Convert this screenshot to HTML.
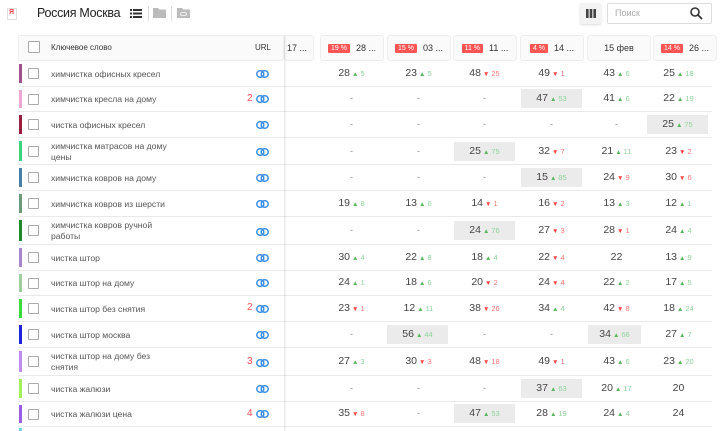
<!DOCTYPE html>
<html><head><meta charset="utf-8">
<style>
*{box-sizing:border-box;margin:0;padding:0}
body{width:720px;height:431px;overflow:hidden;background:#fff;font-family:"Liberation Sans","DejaVu Sans",sans-serif;color:#444;position:relative}
.a{position:absolute}
.hdr{position:absolute;top:35px;height:26px;border:1px solid #eee;border-radius:3px;background:#fafafa;font-size:9px;color:#333;display:flex;align-items:center;justify-content:center;gap:6px}
.bd{background:#f55;color:#fff;font-size:7px;padding:1px 3px;border-radius:1px}
.row{position:absolute;left:18px;width:694px;border-bottom:1px solid #e9e9e9}
.st{position:absolute;left:1px;top:3px;bottom:3px;width:3px}
.cb{position:absolute;left:10px;width:11px;height:11px;border:1px solid #aaa;border-radius:1px;background:#fff}
.kw{position:absolute;left:33px;font-size:8.6px;color:#555;line-height:11px;width:116px}
.n{position:absolute;left:229px;font-size:10px;color:#f55}
.lk{position:absolute;left:238px;width:13px;height:8px}
.c{position:absolute;width:61px;height:19px;text-align:center;font-size:10.5px;color:#444;line-height:19px;white-space:nowrap}
.g{background:#ebebeb}
.u{color:#5cb85c;font-size:6.5px;margin-left:2px}
.u em{font-style:normal;color:#8ed49b;font-size:7.5px;margin-left:2px}
.d{color:#f44;font-size:6.5px;margin-left:2px}
.d em{font-style:normal;color:#f77;font-size:7.5px;margin-left:2px}
.m{color:#888;font-size:9px}
.shadow{position:absolute;left:284px;top:35px;width:3px;height:396px;background:linear-gradient(to right,rgba(0,0,0,.08),rgba(0,0,0,0))}
</style></head><body>

<div class="a" style="left:7px;top:8px;width:10px;height:12px;border:1px solid #ddd;background:#fff;border-radius:1px"></div>
<div class="a" style="left:9px;top:9px;font-size:7px;color:#e44;font-weight:bold">Я</div>
<div class="a" style="left:37px;top:6px;font-size:12.5px;letter-spacing:-0.3px;color:#222">Россия Москва</div>
<svg class="a" style="left:130px;top:9px" width="12" height="9"><g fill="#333"><rect x="0" y="0" width="2" height="2"/><rect x="3" y="0" width="9" height="2"/><rect x="0" y="3.5" width="2" height="2"/><rect x="3" y="3.5" width="9" height="2"/><rect x="0" y="7" width="2" height="2"/><rect x="3" y="7" width="9" height="2"/></g></svg>
<div class="a" style="left:148px;top:6px;width:1px;height:15px;background:#ddd"></div>
<svg class="a" style="left:153px;top:7px" width="13" height="11"><path d="M0 1h5l1.5 1.5H13V11H0z" fill="#bbb"/></svg>
<div class="a" style="left:171px;top:6px;width:1px;height:15px;background:#ddd"></div>
<svg class="a" style="left:177px;top:7px" width="13" height="11"><path d="M0 1h5l1.5 1.5H13V11H0z" fill="#bbb"/><rect x="3.5" y="5.5" width="6" height="3" rx="1.5" fill="none" stroke="#eee" stroke-width="1"/></svg>
<div class="a" style="left:580px;top:3px;width:21px;height:21px;background:#f3f3f3;border-radius:2px;box-shadow:0 1px 2px rgba(0,0,0,.15)"></div>
<svg class="a" style="left:586px;top:9px" width="10" height="9"><g fill="#444"><rect x="0" y="0" width="2.6" height="9"/><rect x="3.7" y="0" width="2.6" height="9"/><rect x="7.4" y="0" width="2.6" height="9"/></g></svg>
<div class="a" style="left:607px;top:3px;width:105px;height:21px;border:1px solid #ddd;border-radius:2px"></div>
<div class="a" style="left:615px;top:8px;font-size:9px;color:#aaa">Поиск</div>
<svg class="a" style="left:690px;top:7px" width="13" height="13"><circle cx="5" cy="5" r="4" fill="none" stroke="#333" stroke-width="1.6"/><path d="M8 8l4 4" stroke="#333" stroke-width="1.8"/></svg>

<div class="a" style="left:18px;top:35px;width:266px;height:26px;background:#fafafa;border:1px solid #eee;border-radius:2px"></div>
<div class="cb" style="left:28px;top:41px;width:12px;height:12px"></div>
<div class="a" style="left:51px;top:43px;font-size:8px;color:#333">Ключевое слово</div>
<div class="a" style="left:255px;top:43px;font-size:8px;color:#333">URL</div>
<div class="hdr" style="left:284px;width:30px;justify-content:flex-start;padding-left:2px">17 ...</div>
<div class="hdr" style="left:320px;width:64px"><span class="bd">19 %</span>28 ...</div>
<div class="hdr" style="left:387px;width:64px"><span class="bd">15 %</span>03 ...</div>
<div class="hdr" style="left:453px;width:64px"><span class="bd">11 %</span>11 ...</div>
<div class="hdr" style="left:520px;width:64px"><span class="bd">4 %</span>14 ...</div>
<div class="hdr" style="left:587px;width:64px">15 фев</div>
<div class="hdr" style="left:653px;width:64px"><span class="bd">14 %</span>26 ...</div>

<svg width="0" height="0" style="position:absolute"><defs><g id="L"><rect x="0.8" y="0.8" width="7" height="6.4" rx="3.2" fill="none" stroke="#3a8ee6" stroke-width="1.5"/><rect x="5.2" y="0.8" width="7" height="6.4" rx="3.2" fill="none" stroke="#3a8ee6" stroke-width="1.5"/></g></defs></svg>

<div class="row" style="top:61px;height:26px"><div class="st" style="background:#a2518f"></div><div class="cb" style="top:7px"></div><div class="kw" style="top:8px">химчистка офисных кресел</div><svg class="lk" style="top:9px"><use href="#L"/></svg></div>
<div class="c" style="left:321px;top:64px">28<span class="u">▲<em>5</em></span></div>
<div class="c" style="left:388px;top:64px">23<span class="u">▲<em>5</em></span></div>
<div class="c" style="left:454px;top:64px">48<span class="d">▼<em>25</em></span></div>
<div class="c" style="left:521px;top:64px">49<span class="d">▼<em>1</em></span></div>
<div class="c" style="left:586px;top:64px">43<span class="u">▲<em>6</em></span></div>
<div class="c" style="left:648px;top:64px">25<span class="u">▲<em>18</em></span></div>

<div class="row" style="top:87px;height:25px"><div class="st" style="background:#f0a6d2"></div><div class="cb" style="top:7px"></div><div class="kw" style="top:7px">химчистка кресла на дому</div><div class="n" style="top:6px">2</div><svg class="lk" style="top:8px"><use href="#L"/></svg></div>
<div class="c m" style="left:321px;top:89px">-</div><div class="c m" style="left:388px;top:89px">-</div><div class="c m" style="left:454px;top:89px">-</div>
<div class="c g" style="left:521px;top:89px">47<span class="u">▲<em>53</em></span></div>
<div class="c" style="left:586px;top:89px">41<span class="u">▲<em>6</em></span></div>
<div class="c" style="left:648px;top:89px">22<span class="u">▲<em>19</em></span></div>

<div class="row" style="top:112px;height:26px"><div class="st" style="background:#9a1e3e"></div><div class="cb" style="top:7px"></div><div class="kw" style="top:8px">чистка офисных кресел</div><svg class="lk" style="top:9px"><use href="#L"/></svg></div>
<div class="c m" style="left:321px;top:115px">-</div><div class="c m" style="left:388px;top:115px">-</div><div class="c m" style="left:454px;top:115px">-</div><div class="c m" style="left:521px;top:115px">-</div><div class="c m" style="left:586px;top:115px">-</div>
<div class="c g" style="left:647px;top:115px">25<span class="u">▲<em>75</em></span></div>

<div class="row" style="top:138px;height:27px"><div class="st" style="background:#3ad47e"></div><div class="cb" style="top:8px"></div><div class="kw" style="top:3px">химчистка матрасов на дому цены</div><svg class="lk" style="top:10px"><use href="#L"/></svg></div>
<div class="c m" style="left:321px;top:142px">-</div><div class="c m" style="left:388px;top:142px">-</div>
<div class="c g" style="left:454px;top:142px">25<span class="u">▲<em>75</em></span></div>
<div class="c" style="left:521px;top:142px">32<span class="d">▼<em>7</em></span></div>
<div class="c" style="left:586px;top:142px">21<span class="u">▲<em>11</em></span></div>
<div class="c" style="left:648px;top:142px">23<span class="d">▼<em>2</em></span></div>

<div class="row" style="top:165px;height:26px"><div class="st" style="background:#4a7ea8"></div><div class="cb" style="top:7px"></div><div class="kw" style="top:8px">химчистка ковров на дому</div><svg class="lk" style="top:9px"><use href="#L"/></svg></div>
<div class="c m" style="left:321px;top:168px">-</div><div class="c m" style="left:388px;top:168px">-</div><div class="c m" style="left:454px;top:168px">-</div>
<div class="c g" style="left:521px;top:168px">15<span class="u">▲<em>85</em></span></div>
<div class="c" style="left:586px;top:168px">24<span class="d">▼<em>9</em></span></div>
<div class="c" style="left:648px;top:168px">30<span class="d">▼<em>6</em></span></div>

<div class="row" style="top:191px;height:26px"><div class="st" style="background:#6a9a78"></div><div class="cb" style="top:7px"></div><div class="kw" style="top:8px">химчистка ковров из шерсти</div><svg class="lk" style="top:9px"><use href="#L"/></svg></div>
<div class="c" style="left:321px;top:194px">19<span class="u">▲<em>8</em></span></div>
<div class="c" style="left:388px;top:194px">13<span class="u">▲<em>6</em></span></div>
<div class="c" style="left:454px;top:194px">14<span class="d">▼<em>1</em></span></div>
<div class="c" style="left:521px;top:194px">16<span class="d">▼<em>2</em></span></div>
<div class="c" style="left:586px;top:194px">13<span class="u">▲<em>3</em></span></div>
<div class="c" style="left:648px;top:194px">12<span class="u">▲<em>1</em></span></div>

<div class="row" style="top:217px;height:28px"><div class="st" style="background:#1f8a2a"></div><div class="cb" style="top:8px"></div><div class="kw" style="top:3px">химчистка ковров ручной работы</div><svg class="lk" style="top:11px"><use href="#L"/></svg></div>
<div class="c m" style="left:321px;top:221px">-</div><div class="c m" style="left:388px;top:221px">-</div>
<div class="c g" style="left:454px;top:221px">24<span class="u">▲<em>76</em></span></div>
<div class="c" style="left:521px;top:221px">27<span class="d">▼<em>3</em></span></div>
<div class="c" style="left:586px;top:221px">28<span class="d">▼<em>1</em></span></div>
<div class="c" style="left:648px;top:221px">24<span class="u">▲<em>4</em></span></div>

<div class="row" style="top:245px;height:26px"><div class="st" style="background:#a884cc"></div><div class="cb" style="top:7px"></div><div class="kw" style="top:8px">чистка штор</div><svg class="lk" style="top:9px"><use href="#L"/></svg></div>
<div class="c" style="left:321px;top:248px">30<span class="u">▲<em>4</em></span></div>
<div class="c" style="left:388px;top:248px">22<span class="u">▲<em>8</em></span></div>
<div class="c" style="left:454px;top:248px">18<span class="u">▲<em>4</em></span></div>
<div class="c" style="left:521px;top:248px">22<span class="d">▼<em>4</em></span></div>
<div class="c" style="left:586px;top:248px">22</div>
<div class="c" style="left:648px;top:248px">13<span class="u">▲<em>9</em></span></div>

<div class="row" style="top:271px;height:25px"><div class="st" style="background:#9fcf9f"></div><div class="cb" style="top:7px"></div><div class="kw" style="top:7px">чистка штор на дому</div><svg class="lk" style="top:8px"><use href="#L"/></svg></div>
<div class="c" style="left:321px;top:273px">24<span class="u">▲<em>1</em></span></div>
<div class="c" style="left:388px;top:273px">18<span class="u">▲<em>6</em></span></div>
<div class="c" style="left:454px;top:273px">20<span class="d">▼<em>2</em></span></div>
<div class="c" style="left:521px;top:273px">24<span class="d">▼<em>4</em></span></div>
<div class="c" style="left:586px;top:273px">22<span class="u">▲<em>2</em></span></div>
<div class="c" style="left:648px;top:273px">17<span class="u">▲<em>5</em></span></div>

<div class="row" style="top:296px;height:26px"><div class="st" style="background:#3adc3a"></div><div class="cb" style="top:7px"></div><div class="kw" style="top:8px">чистка штор без снятия</div><div class="n" style="top:6px">2</div><svg class="lk" style="top:9px"><use href="#L"/></svg></div>
<div class="c" style="left:321px;top:299px">23<span class="d">▼<em>1</em></span></div>
<div class="c" style="left:388px;top:299px">12<span class="u">▲<em>11</em></span></div>
<div class="c" style="left:454px;top:299px">38<span class="d">▼<em>26</em></span></div>
<div class="c" style="left:521px;top:299px">34<span class="u">▲<em>4</em></span></div>
<div class="c" style="left:586px;top:299px">42<span class="d">▼<em>8</em></span></div>
<div class="c" style="left:648px;top:299px">18<span class="u">▲<em>24</em></span></div>

<div class="row" style="top:322px;height:26px"><div class="st" style="background:#2222dd"></div><div class="cb" style="top:7px"></div><div class="kw" style="top:8px">чистка штор москва</div><svg class="lk" style="top:9px"><use href="#L"/></svg></div>
<div class="c m" style="left:321px;top:325px">-</div>
<div class="c g" style="left:387px;top:325px">56<span class="u">▲<em>44</em></span></div>
<div class="c m" style="left:454px;top:325px">-</div><div class="c m" style="left:521px;top:325px">-</div>
<div class="c g" style="left:588px;top:325px;width:53px">34<span class="u">▲<em>66</em></span></div>
<div class="c" style="left:648px;top:325px">27<span class="u">▲<em>7</em></span></div>

<div class="row" style="top:348px;height:28px"><div class="st" style="background:#c08ef0"></div><div class="cb" style="top:8px"></div><div class="kw" style="top:3px">чистка штор на дому без снятия</div><div class="n" style="top:8px">3</div><svg class="lk" style="top:11px"><use href="#L"/></svg></div>
<div class="c" style="left:321px;top:352px">27<span class="u">▲<em>3</em></span></div>
<div class="c" style="left:388px;top:352px">30<span class="d">▼<em>3</em></span></div>
<div class="c" style="left:454px;top:352px">48<span class="d">▼<em>18</em></span></div>
<div class="c" style="left:521px;top:352px">49<span class="d">▼<em>1</em></span></div>
<div class="c" style="left:586px;top:352px">43<span class="u">▲<em>6</em></span></div>
<div class="c" style="left:648px;top:352px">23<span class="u">▲<em>20</em></span></div>

<div class="row" style="top:376px;height:26px"><div class="st" style="background:#a4f05c"></div><div class="cb" style="top:7px"></div><div class="kw" style="top:8px">чистка жалюзи</div><svg class="lk" style="top:9px"><use href="#L"/></svg></div>
<div class="c m" style="left:321px;top:379px">-</div><div class="c m" style="left:388px;top:379px">-</div><div class="c m" style="left:454px;top:379px">-</div>
<div class="c g" style="left:521px;top:379px">37<span class="u">▲<em>63</em></span></div>
<div class="c" style="left:586px;top:379px">20<span class="u">▲<em>17</em></span></div>
<div class="c" style="left:648px;top:379px">20</div>

<div class="row" style="top:402px;height:25px"><div class="st" style="background:#9a5ee6"></div><div class="cb" style="top:7px"></div><div class="kw" style="top:7px">чистка жалюзи цена</div><div class="n" style="top:6px">4</div><svg class="lk" style="top:8px"><use href="#L"/></svg></div>
<div class="c" style="left:321px;top:404px">35<span class="d">▼<em>8</em></span></div>
<div class="c m" style="left:388px;top:404px">-</div>
<div class="c g" style="left:454px;top:404px">47<span class="u">▲<em>53</em></span></div>
<div class="c" style="left:521px;top:404px">28<span class="u">▲<em>19</em></span></div>
<div class="c" style="left:586px;top:404px">24<span class="u">▲<em>4</em></span></div>
<div class="c" style="left:648px;top:404px">24</div>

<div class="a" style="left:19px;top:428px;width:3px;height:3px;background:#6fd6e6"></div>
<div class="shadow"></div>
</body></html>
